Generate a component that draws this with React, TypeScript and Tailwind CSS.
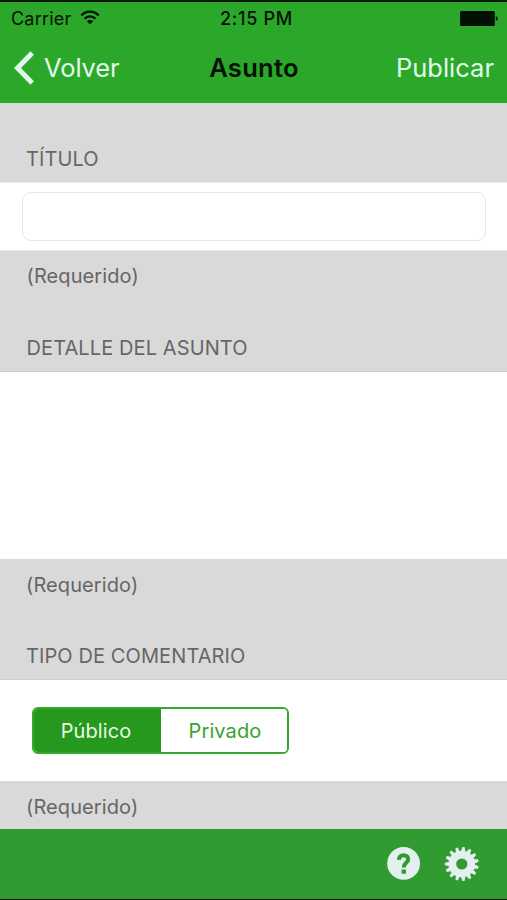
import { useState } from "react";

const COMMENT_TYPES = ["Público", "Privado"];
const GEAR_TEETH = 15;

// Outline of the cog: four points for each tooth, going round the centre.
function gearOutline(cx: number, cy: number, outer: number, inner: number) {
  const step = (Math.PI * 2) / GEAR_TEETH;
  const points: string[] = [];
  for (let i = 0; i < GEAR_TEETH; i++) {
    const mid = i * step + Math.PI;
    const corners: [number, number][] = [
      [inner, -0.36],
      [outer, -0.17],
      [outer, 0.17],
      [inner, 0.36],
    ];
    for (const [radius, offset] of corners) {
      const angle = mid + offset * step;
      points.push(`${(cx + radius * Math.cos(angle)).toFixed(2)} ${(cy + radius * Math.sin(angle)).toFixed(2)}`);
    }
  }
  return `M${points.join("L")}Z`;
}

function WifiIcon() {
  return (
    <svg viewBox="0 0 20 15" className="w-5 h-[15px] -mt-0.5" fill="none" stroke="currentColor" strokeWidth="2.2">
      <path d="M1.3 5.4C6.2.4 13.8.4 18.7 5.4" />
      <path d="M4.6 8.7C7.6 5.7 12.4 5.7 15.4 8.7" />
      <path d="M10 14.3 6.9 11.2C8.7 9.5 11.3 9.5 13.1 11.2Z" fill="currentColor" stroke="none" />
    </svg>
  );
}

function BatteryIcon() {
  return (
    <svg viewBox="0 0 38 15" className="w-[38px] h-[15px]" fill="currentColor">
      <rect x="0" y="0" width="34.8" height="15" rx="1.5" />
      <path d="M35.8 5.2C37.1 5.6 37.8 6.4 37.8 7.5S37.1 9.4 35.8 9.8Z" />
    </svg>
  );
}

function HelpIcon() {
  return (
    <svg viewBox="0 0 34 34" className="w-[34px] h-[34px]">
      <circle cx="16.6" cy="16.4" r="16.4" fill="#e3f1ee" />
      <path
        d="M11.9 12.9C12.1 9.7 13.9 8.2 16.6 8.2C19.4 8.2 21.2 9.8 21.2 12.2C21.2 15.7 16.7 15.9 16.7 20.4"
        fill="none"
        stroke="#319a31"
        strokeWidth="4"
      />
      <rect x="14.5" y="22.4" width="4.5" height="4.3" rx="0.6" fill="#319a31" />
    </svg>
  );
}

function GearIcon() {
  return (
    <svg viewBox="0 0 36 36" className="w-9 h-9">
      <path d={gearOutline(17.8, 18, 17, 13.3)} fill="#e3f1ee" />
      <circle cx="17.8" cy="18" r="5.6" fill="#319a31" />
    </svg>
  );
}

export default function App() {
  const [title, setTitle] = useState("");
  const [detail, setDetail] = useState("");
  const [commentType, setCommentType] = useState(COMMENT_TYPES[0]);

  return (
    <div className="w-[507px] h-[900px] flex flex-col overflow-hidden bg-[#d9d9d9] border-t-2 border-b border-[#041804] font-['Inter','Liberation_Sans',sans-serif] text-[#666667]">
      <header className="h-[101px] shrink-0 bg-[#2ba829] text-[#041004]">
        {/* Status bar */}
        <div className="h-8 grid grid-cols-[1fr_auto_1fr] items-center pl-[11px] pr-[9px] text-[18px] leading-none">
          <div className="flex items-center gap-[9px]">
            <span className="pt-0.5 tracking-[0.2px]">Carrier</span>
            <WifiIcon />
          </div>
          <span className="pl-1 pt-0.5 font-[550] text-[18px] tracking-[0.7px]">2:15 PM</span>
          <div className="flex justify-end">
            <BatteryIcon />
          </div>
        </div>

        {/* Navigation bar */}
        <nav className="h-[69px] grid grid-cols-[1fr_auto_1fr] items-center pl-3.5 pr-[13px] pb-0.5 text-[25.5px] leading-none">
          <button type="button" className="flex items-center gap-[9px] text-[#e1f8ec]">
            <svg viewBox="0 0 21 34" className="w-[21px] h-[34px]" fill="none" stroke="currentColor" strokeWidth="5">
              <path d="M18.2 2 3.5 17 18.2 32" />
            </svg>
            <span className="font-[380] tracking-[-0.1px]">Volver</span>
          </button>
          <h1 className="font-[570] tracking-[0.3px]">Asunto</h1>
          <button type="button" className="text-right font-[380] text-[#e1f8ec]">
            Publicar
          </button>
        </nav>
      </header>

      <main className="flex-1 flex flex-col text-[20px] leading-6 tracking-[0.1px]">
        <h2 className="h-[79px] pt-11 pl-[26px]">TÍTULO</h2>
        <div className="h-[69px] bg-white border-y border-[#ececec] pt-[9px] pl-[22px]">
          <input
            type="text"
            value={title}
            onChange={(e) => setTitle(e.target.value)}
            className="block w-[464px] h-[49px] px-3 rounded-[9px] border-[1.5px] border-[#e6e6e6] bg-white outline-none"
          />
        </div>
        <div className="h-[120.5px] pl-[26.5px] pt-[13px] border-b border-[#cdcdcd]">
          <p>(Requerido)</p>
          <h2 className="pt-12">DETALLE DEL ASUNTO</h2>
        </div>
        <textarea
          value={detail}
          onChange={(e) => setDetail(e.target.value)}
          className="block h-[187.5px] w-full px-[26px] py-3 bg-white resize-none outline-none"
        />
        <div className="h-[121px] pl-[26px] pt-3.5 border-b border-[#cdcdcd]">
          <p>(Requerido)</p>
          <h2 className="pt-[47px]">TIPO DE COMENTARIO</h2>
        </div>
        <div className="h-[101px] bg-white pt-[27px] pl-8">
          <div className="w-[257px] h-[47px] flex rounded-[6px] border-2 border-[#35aa2b] overflow-hidden">
            {COMMENT_TYPES.map((type) => (
              <button
                key={type}
                type="button"
                onClick={() => setCommentType(type)}
                className={`flex-1 ${type === commentType ? "bg-[#26981d] pr-[3px] text-[#e6fbe4]" : "bg-white pl-0.5 text-[#35a52d]"}`}
              >
                {type}
              </button>
            ))}
          </div>
        </div>
        <p className="h-12 pl-[26px] pt-3.5">(Requerido)</p>
      </main>

      <footer className="h-[70px] shrink-0 flex items-center justify-end gap-[23px] pr-[27px] bg-[#319a31]">
        <button type="button" aria-label="Ayuda">
          <HelpIcon />
        </button>
        <button type="button" aria-label="Ajustes">
          <GearIcon />
        </button>
      </footer>
    </div>
  );
}
